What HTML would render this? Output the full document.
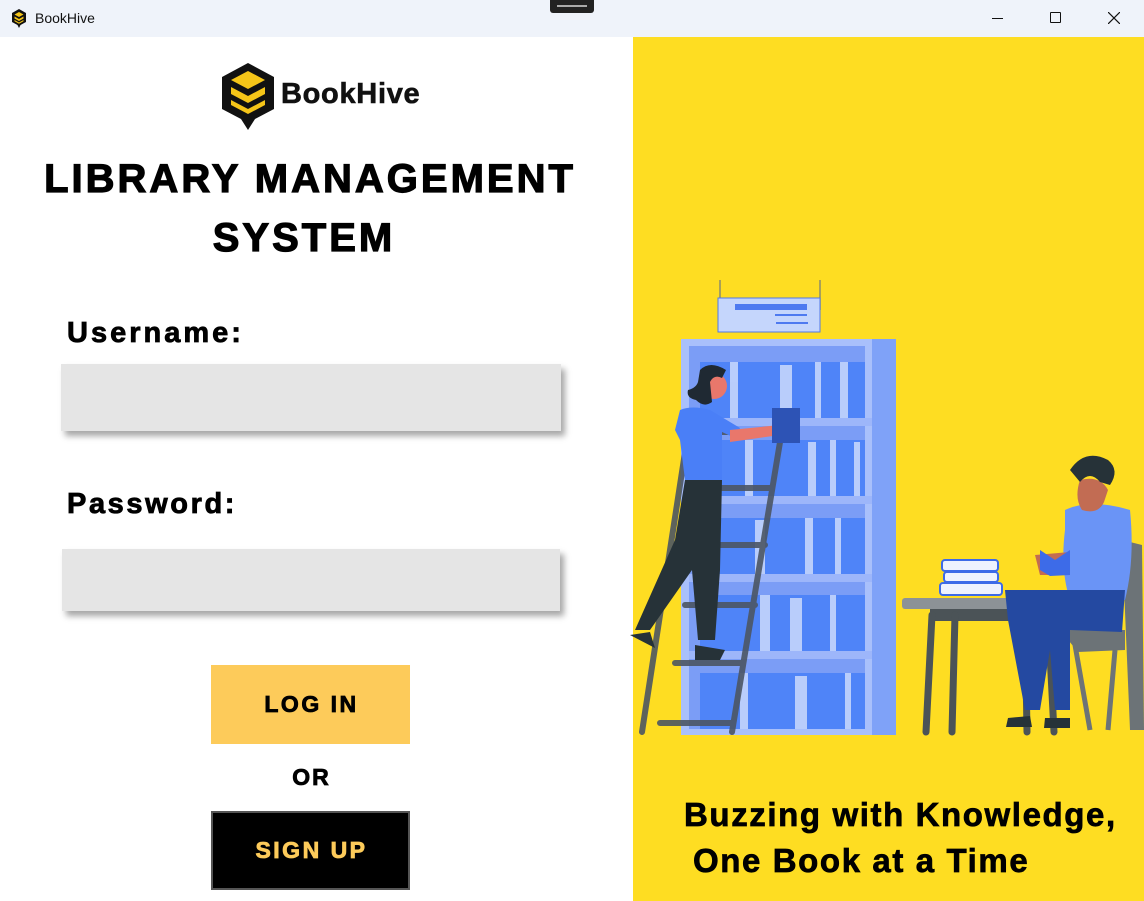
<!DOCTYPE html>
<html><head><meta charset="utf-8"><style>
*{margin:0;padding:0;box-sizing:border-box}
body{width:1144px;height:901px;overflow:hidden;background:#fff;font-family:"Liberation Sans",sans-serif;position:relative}
.tb{position:absolute;left:0;top:0;width:1144px;height:37px;background:#EFF3FA}
.abs{position:absolute}
.h{font-weight:bold;color:#000;-webkit-text-stroke:1.2px #000;white-space:nowrap}
.inp{position:absolute;background:#E5E5E5;box-shadow:4px 5px 6px rgba(0,0,0,.35)}
</style></head><body>
<div class="tb">
<svg class="abs" style="left:11px;top:9px" width="16" height="19" viewBox="0 0 16 19"><path d="M8 0 L15 4 V13 L9.5 16 L8 19 L6.5 16 L1 13 V4Z" fill="#111"/><path d="M8 3 L12.5 5.5 L8 8 L3.5 5.5Z M3.5 7.5 L8 10 L12.5 7.5 V9.5 L8 12 L3.5 9.5Z M3.5 11 L8 13.5 L12.5 11 V12.3 L8 14.8 L3.5 12.3Z" fill="#F5C518"/></svg>
<div class="abs" style="left:35px;top:10px;font-size:14px;color:#111">BookHive</div>
<div class="abs" style="left:550px;top:0;width:44px;height:13px;background:#222;border-radius:0 0 3px 3px"><div style="margin:5px 7px;height:2px;border-top:1px solid #aaa;border-bottom:1px solid #aaa"></div></div>
<div class="abs" style="left:992px;top:18px;width:11px;height:1px;background:#111"></div>
<div class="abs" style="left:1050px;top:12px;width:11px;height:11px;border:1px solid #111;border-radius:1px"></div>
<svg class="abs" style="left:1108px;top:12px" width="12" height="12"><path d="M0 0L12 12M12 0L0 12" stroke="#111" stroke-width="1.2"/></svg>
</div>

<svg class="abs" style="left:222px;top:63px" width="52" height="67" viewBox="0 0 52 67"><path d="M26 0 L52 14 V46 L33 56 L26 67 L19 56 L0 46 V14Z" fill="#111"/><path d="M26 8 L43 17 L26 26 L9 17Z M9 24 L26 33 L43 24 V31 L26 40 L9 31Z M9 37 L26 46 L43 37 V42 L26 51 L9 42Z" fill="#F5C518"/></svg>
<div class="abs h" style="left:281px;top:78px;font-size:29px;letter-spacing:0.7px;-webkit-text-stroke:0.6px #111;color:#111">BookHive</div>

<div class="abs h" style="left:0;width:620px;text-align:center;top:157px;font-size:40px;letter-spacing:3px">LIBRARY MANAGEMENT</div>
<div class="abs h" style="left:0;width:608px;text-align:center;top:216px;font-size:40px;letter-spacing:3px">SYSTEM</div>

<div class="abs h" style="left:67px;top:317px;font-size:29px;letter-spacing:3px;-webkit-text-stroke:0.8px #000">Username:</div>
<div class="inp" style="left:61px;top:364px;width:500px;height:67px"></div>
<div class="abs h" style="left:67px;top:488px;font-size:29px;letter-spacing:2.6px;-webkit-text-stroke:0.8px #000">Password:</div>
<div class="inp" style="left:62px;top:549px;width:498px;height:62px"></div>

<div class="abs" style="left:211px;top:665px;width:199px;height:79px;background:#FDCB5A"></div>
<div class="abs h" style="left:211px;width:201px;text-align:center;top:691px;font-size:23px;letter-spacing:2.5px;-webkit-text-stroke:0.8px #000">LOG IN</div>
<div class="abs h" style="left:211px;width:201px;text-align:center;top:764px;font-size:23px;letter-spacing:2px;-webkit-text-stroke:0.8px #000">OR</div>
<div class="abs" style="left:211px;top:811px;width:199px;height:79px;background:#000;border:2px solid #555"></div>
<div class="abs h" style="left:211px;width:201px;text-align:center;top:837px;font-size:23px;letter-spacing:2.5px;color:#FDCB5A;-webkit-text-stroke:0.8px #FDCB5A">SIGN UP</div>

<div class="abs" style="left:633px;top:37px;width:511px;height:864px;background:#FEDD22"></div>
<svg class="abs" style="left:630px;top:270px" width="514" height="480" viewBox="0 0 514 480">
<path d="M90 10V40M190 10V40" stroke="#8b8b6b" stroke-width="1.5"/>
<rect x="88" y="28" width="102" height="34" fill="#C5D6FC" stroke="#5178E8"/>
<rect x="105" y="34" width="72" height="6" fill="#4E7AF0"/><rect x="145" y="44" width="32" height="2" fill="#4E7AF0"/><rect x="146" y="52" width="32" height="2" fill="#4E7AF0"/>
<rect x="51" y="69" width="215" height="396" fill="#A9C0FB"/>
<rect x="242" y="69" width="24" height="396" fill="#7FA2F8"/>
<rect x="59" y="76" width="176" height="383" fill="#7B9DF6"/>
<g fill="#4F84F8">
<rect x="70" y="92" width="165" height="56"/><rect x="70" y="170" width="165" height="56"/><rect x="70" y="248" width="165" height="56"/><rect x="70" y="325" width="165" height="56"/><rect x="70" y="403" width="165" height="56"/></g>
<g fill="#C5D6FC" opacity=".9">
<rect x="100" y="92" width="8" height="56"/><rect x="150" y="95" width="12" height="53"/><rect x="185" y="92" width="6" height="56"/><rect x="210" y="92" width="8" height="56"/>
<rect x="115" y="170" width="8" height="56"/><rect x="178" y="172" width="8" height="54"/><rect x="200" y="170" width="6" height="56"/><rect x="224" y="172" width="6" height="54"/>
<rect x="125" y="250" width="10" height="54"/><rect x="175" y="248" width="8" height="56"/><rect x="205" y="248" width="6" height="56"/>
<rect x="130" y="325" width="10" height="56"/><rect x="160" y="328" width="12" height="53"/><rect x="200" y="325" width="6" height="56"/>
<rect x="110" y="403" width="8" height="56"/><rect x="165" y="406" width="12" height="53"/><rect x="215" y="403" width="6" height="56"/></g>
<g fill="#9DB6FA"><rect x="59" y="148" width="183" height="8"/><rect x="59" y="226" width="183" height="8"/><rect x="59" y="304" width="183" height="8"/><rect x="59" y="381" width="183" height="8"/></g>
<g stroke="#4B5563" stroke-width="6" fill="none" stroke-linecap="round" opacity=".9"><path d="M12 462L60 150M102 462L152 160M30 453H102M45 393H112M55 335H125M70 275H135M80 218H140M88 162H150"/></g>
<!-- woman -->
<circle cx="84" cy="116" r="13" fill="#E9776B"/>
<path d="M70 100 Q80 90 96 100 L92 108 Q84 104 80 112 L82 132 Q74 138 66 130 Q56 128 58 120 Q66 118 68 112Z" fill="#1F2933"/>
<path d="M50 140 Q62 135 80 140 L110 158 L105 168 L92 162 L92 210 L55 210 L50 170 L45 160Z" fill="#4A7FF7"/>
<path d="M100 160 L150 155 L150 165 L100 172Z" fill="#E9776B"/>
<rect x="142" y="138" width="28" height="35" fill="#2D53B5"/>
<path d="M55 210 L92 210 L90 300 L85 370 L68 370 L62 300 L20 360 L5 360 L45 270Z" fill="#263238"/>
<path d="M0 365 L20 362 L25 378 Z M65 375 L95 380 L90 390 L65 390Z" fill="#263238"/>
<rect x="312" y="290" width="56" height="11" rx="3" fill="#EEF2FE" stroke="#3D6BE8" stroke-width="2"/>
<rect x="314" y="302" width="54" height="10" rx="3" fill="#EEF2FE" stroke="#3D6BE8" stroke-width="2"/>
<rect x="310" y="313" width="62" height="12" rx="3" fill="#EEF2FE" stroke="#3D6BE8" stroke-width="2"/>
<rect x="272" y="328" width="177" height="11" rx="3" fill="#8C9296"/>
<rect x="300" y="339" width="120" height="12" fill="#4B5357"/>
<path d="M302 345L296 462M325 345L322 462M395 345L397 462M418 345L424 462" stroke="#4B5357" stroke-width="7" stroke-linecap="round"/>
<path d="M492 270 L512 275 L514 460 L500 460Z" fill="#6C7377"/>
<path d="M430 360 L495 360 L495 380 L448 382Z" fill="#6C7377"/>
<path d="M445 375 L460 460 M485 380 L478 460" stroke="#6C7377" stroke-width="5"/>
<path d="M435 240 Q460 228 500 240 Q505 290 495 330 L440 330 Q430 300 435 260Z" fill="#6A94F6"/>
<path d="M450 210 Q470 205 478 220 L474 232 Q468 245 452 240 Q444 228 450 210Z" fill="#C26C53"/>
<path d="M440 200 Q455 178 478 190 Q490 200 480 215 L470 212 Q460 200 450 212 Z" fill="#263238"/>
<path d="M375 320 L495 320 L492 362 L440 360 L440 440 L425 440 L420 380 L410 440 L395 440 L378 350Z" fill="#2449A1"/>
<path d="M405 285 L440 282 L440 305 L410 305Z" fill="#C26C53"/>
<path d="M410 280 L425 290 L440 280 L440 305 L420 306 L410 300Z" fill="#3D6BE8"/>
<path d="M378 448 L400 446 L402 457 L376 457Z M415 448 L440 448 L440 458 L414 458Z" fill="#263238"/>
</svg>

<div class="abs h" style="left:684px;top:796px;font-size:33px;letter-spacing:1.6px;-webkit-text-stroke:0.7px #000">Buzzing with Knowledge,</div>
<div class="abs h" style="left:693px;top:842px;font-size:33px;letter-spacing:1.6px;-webkit-text-stroke:0.7px #000">One Book at a Time</div>
</body></html>
